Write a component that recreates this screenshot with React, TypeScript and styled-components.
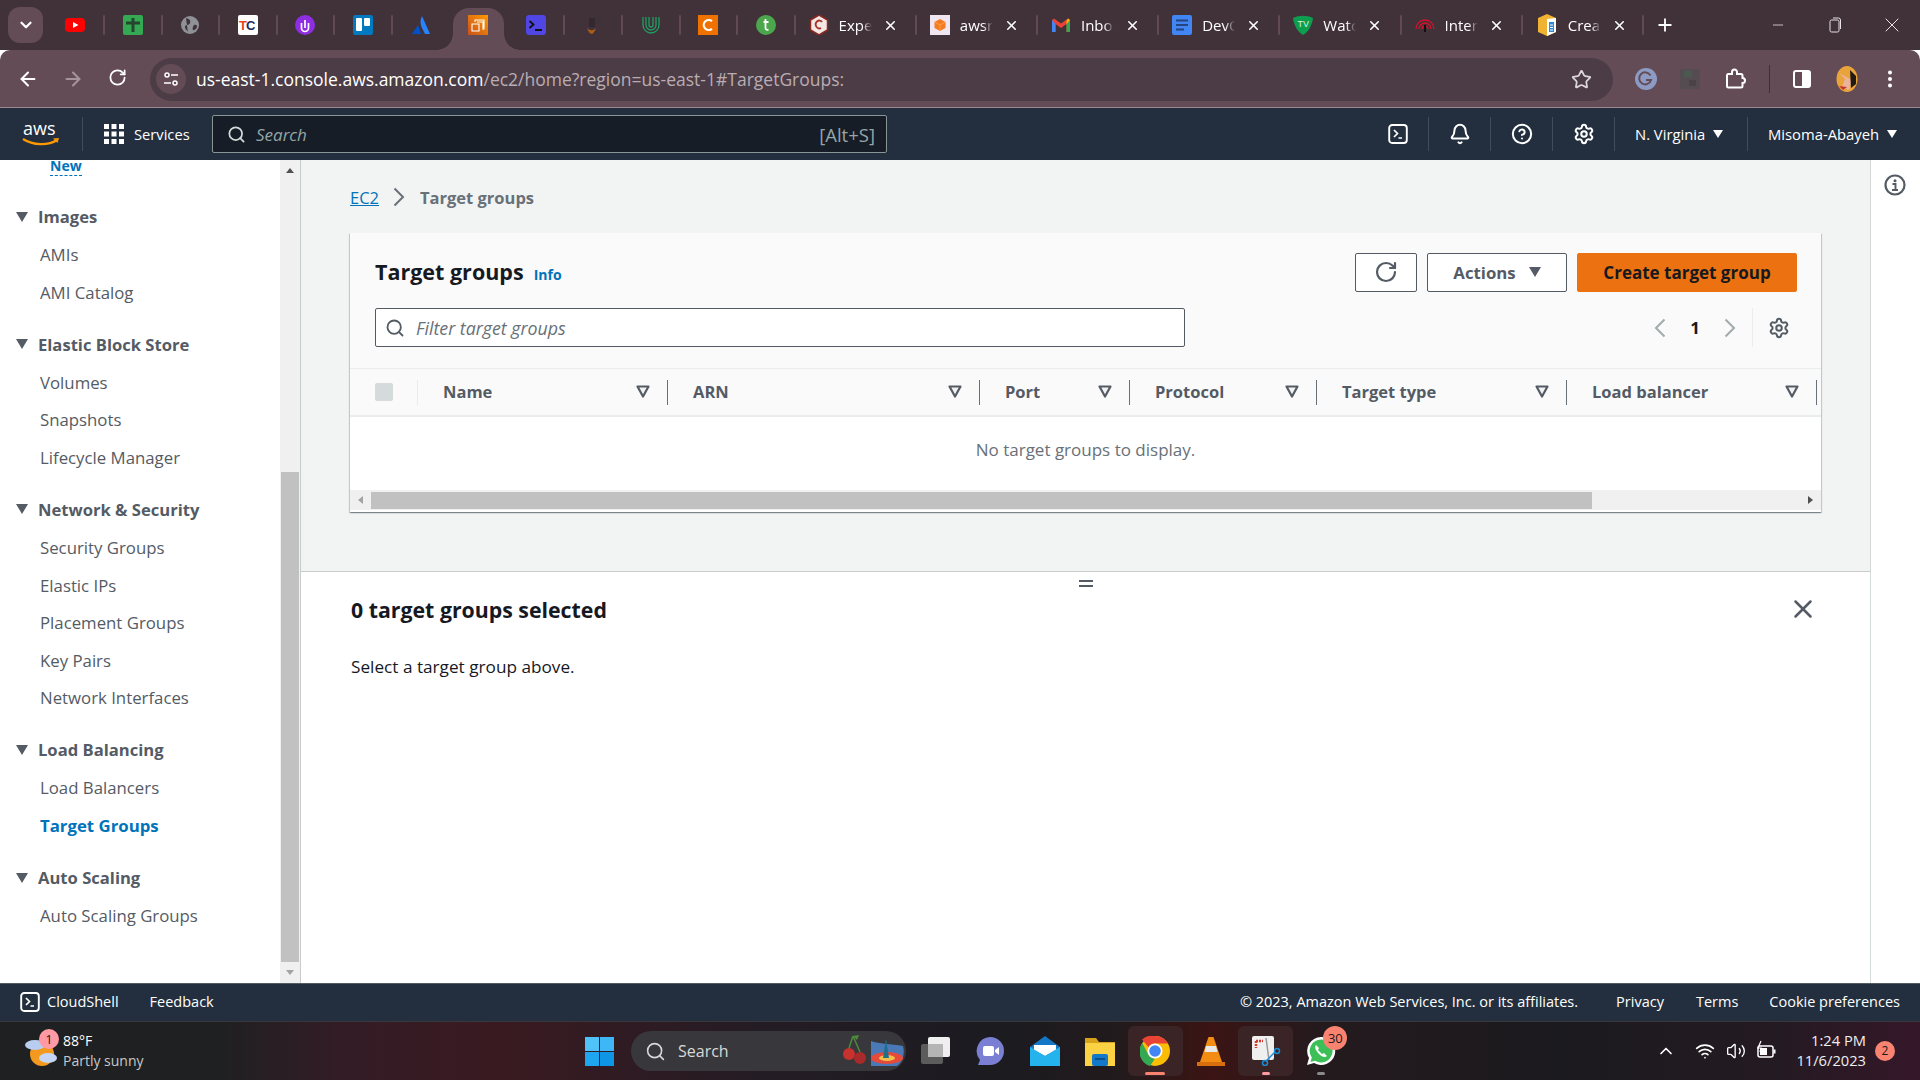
import React from "react";
import styled, { createGlobalStyle } from "styled-components";
import {
  ArrowLeft, ArrowRight, RotateCw, Star, Search, X, Plus, Minus, Bell, CircleHelp, Settings,
  ChevronDown, ChevronUp, EllipsisVertical, Wifi, Volume2,
} from "lucide-react";

const UI = `"Open Sans", "Noto Sans", "Liberation Sans", sans-serif`;
const CONSOLE = `"Open Sans", "Noto Sans", "Liberation Sans", sans-serif`;

const Global = createGlobalStyle`
  html, body { margin: 0; padding: 0; background: #fff; }
  * { box-sizing: border-box; }
`;

const Page = styled.div`
  width: 1920px; height: 1080px; overflow: hidden;
  display: flex; flex-direction: column;
  font-family: ${CONSOLE};
`;

/* ---------- browser tab strip ---------- */
const TabStrip = styled.div`
  height: 50px; flex: none; background: #413139;
  display: flex; align-items: stretch; position: relative;
`;
const TabSearch = styled.div`
  width: 35px; height: 36px; margin: 7px 3.5px 0 8px; border-radius: 12px;
  background: #644c57; color: #fff; display: flex; align-items: center; justify-content: center;
`;
const Tab = styled.div<{ $wide?: boolean; $sep?: boolean }>`
  position: relative; z-index: 0; flex: none;
  width: ${p => (p.$wide ? "121.2px" : "57.55px")};
  margin-top: 8px;
  display: flex; align-items: center;
  justify-content: ${p => (p.$wide ? "flex-start" : "center")};
  padding: ${p => (p.$wide ? "0 0 8px 14px" : "0 0 8px 0")};
  color: #fff; font-family: ${UI}; font-size: 15px;
  &::after {
    content: ""; position: absolute; right: -1px; top: 7px; width: 2px; height: 20px; border-radius: 1px;
    background: ${p => (p.$sep ? "#5f4a55" : "transparent")};
  }
`;
const ActiveShape = styled.span`
  position: absolute; z-index: -1; left: 4px; right: 3px; top: 0; bottom: 0;
  background: #644c57; border-radius: 16px 16px 0 0;
`;
const Flare = styled.span<{ $right?: boolean }>`
  position: absolute; bottom: 0; width: 16px; height: 16px;
  ${p => (p.$right ? "right: -16px;" : "left: -16px;")}
  background: ${p => (p.$right
    ? "radial-gradient(circle at 100% 0, transparent 15.5px, #644c57 16px)"
    : "radial-gradient(circle at 0 0, transparent 15.5px, #644c57 16px)")};
`;
const TabTitle = styled.span`
  width: 33px; margin-left: 10px; overflow: hidden; white-space: nowrap; font-size: 15px;
  -webkit-mask-image: linear-gradient(90deg, #000 70%, transparent);
  mask-image: linear-gradient(90deg, #000 70%, transparent);
`;
const TabClose = styled.span`
  margin-left: 11px; display: flex; color: #fff;
`;
const NewTab = styled.div`
  width: 44px; display: flex; align-items: center; justify-content: center; color: #fff;
`;
const WindowControls = styled.div`
  margin-left: auto; display: flex; align-items: center; color: #e8e2e5; height: 50px;
`;
const WinBtn = styled.div`
  width: 57px; display: flex; align-items: center; justify-content: center;
`;

/* ---------- browser toolbar ---------- */
const Toolbar = styled.div`
  height: 58px; flex: none; background: #644c57; border-top-left-radius: 10px; border-top-right-radius: 10px;
  border-bottom: 1px solid #9b8893;
  display: flex; align-items: center; color: #fff; overflow: hidden;
`;
const NavGroupBtns = styled.div`
  flex: none; display: flex; padding-left: 6px; width: 150px;
`;
const NavBtn = styled.div<{ $dim?: boolean }>`
  width: 44.5px; display: flex; justify-content: center;
  color: ${p => (p.$dim ? "#a5949d" : "#fff")};
`;
const Omnibox = styled.div`
  width: 1463px; flex: none; height: 43px; margin-top: 1px; border-radius: 22px; background: #4c3c45;
  display: flex; align-items: center; padding: 0 21px 0 6px;
`;
const SiteChip = styled.div`
  width: 30px; height: 30px; border-radius: 50%; background: #644c57;
  display: flex; align-items: center; justify-content: center; flex: none;
`;
const Url = styled.div`
  margin-left: 10px; font-family: ${UI}; font-size: 17.5px; color: #fff; white-space: nowrap;
  span { color: #b9adb3; }
`;
const OmniEnd = styled.div`
  margin-left: auto; display: flex; color: #dcd5d9;
`;
const ToolIcon = styled.div<{ $w: number }>`
  width: ${p => p.$w}px; display: flex; justify-content: center; flex: none; color: #fff;
`;
const ToolSep = styled.div`
  width: 1px; height: 28px; background: #3f3038; flex: none;
`;

/* ---------- aws top nav ---------- */
const TopNav = styled.div`
  height: 52px; flex: none; background: #232f3e; display: flex; align-items: center; color: #fff;
`;
const LogoWrap = styled.div`
  width: 83px; height: 34px; padding-left: 22px; border-right: 1px solid #414d5c; display: flex; align-items: center;
`;
const ServicesBtn = styled.div`
  width: 129px; display: flex; align-items: center; padding-left: 21px; gap: 10px; font-size: 14.7px;
`;
const NavSearch = styled.div`
  width: 675px; height: 38px; background: #161d26; border: 1px solid #879596; border-radius: 2px;
  display: flex; align-items: center; padding: 0 11px 0 14px; color: #95a5a6;
  font-size: 17px;
`;
const NavSearchText = styled.span`
  margin-left: 10px; font-style: italic; color: #95a5a6;
`;
const NavSearchKey = styled.span`
  margin-left: auto; font-size: 18.5px; color: #95a5a6;
`;
const NavRight = styled.div`
  margin-left: auto; display: flex; align-items: center; height: 34px; padding-right: 22px;
`;
const NavIcon = styled.div`
  width: 62px; height: 100%; display: flex; align-items: center; justify-content: center;
  border-right: 1px solid #414d5c;
`;
const NavMenu = styled.div<{ $w: number; $last?: boolean }>`
  width: ${p => p.$w}px; height: 100%; display: flex; align-items: center; gap: 8px; font-size: 14.8px; padding-left: 20px; white-space: nowrap;
  ${p => (p.$last ? "" : "border-right: 1px solid #414d5c;")}
`;
const Caret = styled.span`
  width: 0; height: 0; border-left: 5px solid transparent; border-right: 5px solid transparent; border-top: 8px solid #fff;
`;

/* ---------- body ---------- */
const Body = styled.div`
  flex: 1; display: flex; min-height: 0;
`;
const Sidebar = styled.nav`
  width: 280px; flex: none; overflow: hidden; background: #fff; font-size: 16.8px;
`;
const NewLink = styled.div`
  width: fit-content; margin-left: 50px; margin-bottom: 22px; height: 16px; line-height: 12px;
  font-size: 14px; font-weight: 700; color: #0073bb; border-bottom: 1px dashed #0073bb;
`;
const NavGroup = styled.div`
  margin-bottom: 14.5px;
`;
const GroupHead = styled.div`
  height: 37px; margin-bottom: 1px; display: flex; align-items: center; padding-left: 16px; gap: 10px;
  font-weight: 700; font-size: 16.6px; color: #545b64;
`;
const GroupCaret = styled.span`
  width: 0; height: 0; border-left: 6.5px solid transparent; border-right: 6.5px solid transparent; border-top: 10px solid #545b64;
`;
const NavItem = styled.div<{ $active?: boolean }>`
  height: 37.6px; line-height: 37.6px; padding-left: 40px;
  color: ${p => (p.$active ? "#0073bb" : "#545b64")};
  font-weight: ${p => (p.$active ? 700 : 400)};
`;
const ScrollTrack = styled.div`
  width: 20px; flex: none; background: #f0f0f0; display: flex; flex-direction: column; align-items: center; padding: 0 1px;
`;
const ScrollArrow = styled.div<{ $down?: boolean }>`
  height: 21px; flex: none; display: flex; align-items: center; justify-content: center; width: 100%;
  &::before {
    content: ""; width: 0; height: 0; border-left: 4.5px solid transparent; border-right: 4.5px solid transparent;
    ${p => (p.$down ? "border-top: 5px solid #a3a3a3;" : "border-bottom: 5px solid #505050;")}
  }
`;
const ScrollGap = styled.div`
  height: 291px; flex: none;
`;
const ScrollThumb = styled.div`
  flex: 1; width: 100%; background: #c1c1c1;
`;
const MainCol = styled.main`
  flex: 1; min-width: 0; display: flex; flex-direction: column; border-left: 1px solid #c8cccc; border-right: 1px solid #d5dbdb;
`;
const TopPane = styled.section`
  height: 411px; flex: none; background: #f2f3f3; padding: 0 49px;
`;
const Crumbs = styled.div`
  height: 73px; display: flex; align-items: center; font-size: 16.5px; color: #687078; font-weight: 700;
  padding-top: 1px;
`;
const CrumbLink = styled.span`
  color: #0073bb; font-weight: 400; text-decoration: underline;
`;
const CrumbSep = styled.span`
  display: flex; margin: 0 15px 0 14px; color: #687078;
`;
const Card = styled.div`
  background: #fff; box-shadow: 0 1px 1px 0 rgba(0,28,36,.3), 1px 1px 1px 0 rgba(0,28,36,.15), -1px 1px 1px 0 rgba(0,28,36,.15);
  height: 279px;
`;
const CardHead = styled.div`
  background: #fafafa; padding: 20px 25px 21px 25px; height: 135px;
`;
const HeadRow = styled.div`
  display: flex; align-items: center; height: 39px;
`;
const FilterRow = styled(HeadRow)`
  margin-top: 16px;
`;
const CardTitle = styled.h2`
  margin: 0 0 3px; font-size: 21.5px; font-weight: 700; color: #16191f;
`;
const InfoLink = styled.span`
  margin-left: 10px; font-size: 14px; font-weight: 700; color: #0073bb; padding-top: 3px;
`;
const Actions = styled.div`
  margin-left: auto; display: flex; gap: 10px; margin-right: -1px;
`;
const Btn = styled.button<{ $w: number }>`
  width: ${p => p.$w}px; height: 39px; background: #fff; border: 1px solid #545b64; border-radius: 2px;
  display: flex; align-items: center; justify-content: center; gap: 13px;
  font-family: ${CONSOLE}; font-size: 16.8px; font-weight: 700; color: #545b64; padding: 0 0 1px;
`;
const PrimaryBtn = styled(Btn)`
  background: #ec7211; border-color: #ec7211; color: #16191f; font-size: 17px;
`;
const BtnCaret = styled.span`
  width: 0; height: 0; border-left: 6.5px solid transparent; border-right: 6.5px solid transparent; border-top: 10px solid #545b64;
`;
const FilterBox = styled.div`
  width: 810px; height: 39px; background: #fff; border: 1px solid #545b64; border-radius: 2px;
  display: flex; align-items: center; padding-left: 9px; gap: 11px; color: #545b64;
`;
const FilterText = styled.span`
  font-style: italic; font-size: 17.8px; color: #687078;
`;
const Pager = styled.div`
  margin-left: auto; display: flex; align-items: center; height: 39px; margin-right: -9px;
`;
const PagerArrow = styled.span`
  display: flex; color: #a0abab;
`;
const PagerNum = styled.span`
  width: 58px; text-align: center; font-size: 16.8px; font-weight: 700; color: #16191f;
`;
const PagerGear = styled.div`
  margin-left: 16px; height: 39px; width: 53px; border-left: 1px solid #eaeded;
  display: flex; align-items: center; justify-content: center; color: #545b64;
`;
const TableHead = styled.div`
  height: 49px; background: #fafafa; border-top: 1px solid #eaeded; border-bottom: 2px solid #eaeded;
  display: grid; grid-template-columns: 68px 250px 312px 150px 187px 250px 250px 1fr; align-items: center;
`;
const HeadCell = styled.div<{ $light?: boolean }>`
  position: relative; height: 25px; display: flex; align-items: center; justify-content: space-between;
  padding: 0 17px 1px 25px; font-weight: 700; font-size: 16.5px; color: #545b64;
  border-right: 1px solid ${p => (p.$light ? "#eaeded" : "#687078")};
`;
const CheckCell = styled(HeadCell)`
  padding: 0 0 0 25px;
`;
const CheckBox = styled.span`
  width: 18px; height: 18px; background: #d5dbdb; border-radius: 2px;
`;
const TableBody = styled.div`
  height: 73px; background: #fff; display: flex; align-items: center; justify-content: center;
  font-size: 17px; color: #687078; padding-bottom: 8px;
`;
const HScroll = styled.div`
  height: 20px; background: #f0f0f0; display: flex; align-items: center;
`;
const HArrow = styled.span<{ $right?: boolean }>`
  width: 21px; flex: none; display: flex; justify-content: center;
  ${p => (p.$right ? "margin-left: auto;" : "")}
  &::before {
    content: ""; width: 0; height: 0; border-top: 4.5px solid transparent; border-bottom: 4.5px solid transparent;
    ${p => (p.$right ? "border-left: 5px solid #505050;" : "border-right: 5px solid #a3a3a3;")}
  }
`;
const HThumb = styled.div`
  width: 1221px; height: 17px; background: #c1c1c1;
`;
const BottomPane = styled.section`
  flex: 1; background: #fff; border-top: 1px solid #c8cccc; padding: 0 49px 0 50px;
`;
const Handle = styled.div`
  height: 21px; display: flex; flex-direction: column; align-items: center; justify-content: center; gap: 3px; padding-top: 1px;
  span { width: 14px; height: 2px; background: #545b64; display: block; }
`;
const BottomHead = styled.div`
  display: flex; align-items: center; justify-content: space-between; height: 32px; padding-right: 3px;
`;
const BottomTitle = styled.h2`
  margin: 0; font-size: 21.3px; font-weight: 700; color: #16191f;
`;
const BottomText = styled.p`
  margin: 30px 0 0; font-size: 17.2px; color: #16191f; line-height: 24px;
`;
const Rail = styled.aside`
  width: 49px; flex: none; background: #fff; display: flex; justify-content: center; padding-top: 14px; padding-right: 2px; color: #545b64;
`;

/* ---------- console footer ---------- */
const Footer = styled.footer`
  height: 38px; flex: none; background: #232f3e; border-top: 1px solid #545b64; color: #fff;
  display: flex; align-items: center; font-size: 14.5px; padding: 0 20px 2px;
`;
const FooterItem = styled.span<{ $l?: number }>`
  margin-left: ${p => p.$l ?? 0}px; white-space: nowrap; display: flex; align-items: center; gap: 7px;
`;
const FooterEnd = styled.div`
  margin-left: auto; display: flex;
`;

/* ---------- windows taskbar ---------- */
const Taskbar = styled.div`
  height: 59px; flex: none; position: relative; display: flex; align-items: center; color: #fff; font-family: ${UI};
  border-top: 1px solid #38383c;
  background: linear-gradient(90deg, #1f2022 0, #1f2022 220px, #331c26 340px, #3a1a21 500px, #241c24 760px, #1b1b20 1000px, #221a1c 1120px, #3b1414 1210px, #241a1e 1320px, #1b1a1f 1560px, #241a22 1780px, #351729 1920px);
`;
const Weather = styled.div`
  position: relative; width: 631px; flex: none; height: 100%; padding-left: 24px; display: flex; align-items: center;
  font-size: 14px; line-height: 20px; padding-bottom: 1px;
`;
const WeatherBadge = styled.span`
  position: absolute; left: 39px; top: 7px; width: 20px; height: 20px; border-radius: 50%;
  background: #ff99a4; color: #1a1a1a; font-size: 13px; text-align: center; line-height: 20px;
`;
const WeatherText = styled.div`
  margin-left: 5px;
  small { display: block; font-size: 14px; color: #c8c8c8; }
`;
const WinLogo = styled.div`
  position: absolute; left: 585px; top: 15px; display: flex;
`;
const TaskSearch = styled.div`
  width: 275px; height: 40px; border-radius: 20px; background: #38383c; flex: none; position: relative;
  display: flex; align-items: center; padding-left: 14px; gap: 12px; color: #d8d8d8; font-size: 16px;
`;
const SearchArt = styled.div`
  position: absolute; right: 1px; top: 2px; display: flex;
`;
const TaskIcon = styled.div<{ $active?: boolean }>`
  position: relative; width: 55.2px; height: 50px; flex: none; display: flex; align-items: center; justify-content: center;
  ${p => (p.$active ? `background: #3a2426; border-radius: 6px;` : "")}
`;
const TaskDot = styled.span<{ $w: number; $c: string }>`
  position: absolute; bottom: 1px; left: 50%; transform: translateX(-50%);
  height: 3px; border-radius: 2px; width: ${p => p.$w}px; background: ${p => p.$c};
`;
const CountBadge = styled.span`
  position: absolute; left: 30px; top: 0; width: 24px; height: 24px; border-radius: 50%;
  background: #f98371; color: #1a1a1a; font-size: 13px; text-align: center; line-height: 24px;
`;
const Tray = styled.div`
  margin-left: auto; display: flex; align-items: center; height: 100%; padding-right: 25px; color: #fff;
`;
const TrayIcon = styled.div<{ $w: number }>`
  width: ${p => p.$w}px; display: flex; justify-content: center; flex: none;
`;
const Clock = styled.div`
  text-align: right; font-size: 14.7px; line-height: 20px; margin-left: 16px; color: #eee; white-space: nowrap; padding-bottom: 2px;
`;
const ClockBadge = styled.span`
  margin-left: 9px; width: 20px; height: 20px; border-radius: 50%; background: #f98371; color: #1a1a1a;
  font-size: 12px; text-align: center; line-height: 20px;
`;
const TaskCenter = styled.div`
  display: flex; align-items: center; margin-left: 1px;
`;

/* ---------- drawings ---------- */
const S = ({ children, size = 20, vb = "0 0 20 20", w }: { children: React.ReactNode; size?: number; vb?: string; w?: number }) => (
  <svg width={w ?? size} height={size} viewBox={vb} style={{ display: "block", flex: "none" }}>{children}</svg>
);

const icons: Record<string, React.ReactNode> = {
  yt: <S><rect y="3" width="20" height="14" rx="4" fill="#f00" /><path d="M8 7l5.5 3L8 13z" fill="#fff" /></S>,
  sheet: <S><rect width="20" height="20" rx="2" fill="#34a853" /><path d="M3 8h14M10 3v14" stroke="#24452f" strokeWidth="3" /></S>,
  globe: <S><circle cx="10" cy="10" r="9" fill="#8e9297" /><path d="M6 3c3 1 5 2 4 5s-5 1-5 4 3 3 3 6M14 10c3-1 3 1 3 2s-3 4-4 3 0-4 1-5z" fill="#413139" /></S>,
  tc: <S><rect width="20" height="20" rx="2" fill="#fff" /><text x="1" y="15" fontFamily="Liberation Sans" fontSize="13" fontWeight="700" fill="#e8471b">T</text><text x="8" y="15" fontFamily="Liberation Sans" fontSize="13" fontWeight="700" fill="#1c2a5e">C</text></S>,
  up: <S><circle cx="10" cy="10" r="10" fill="#8e2de2" /><path d="M6.5 8v5a3.5 3.5 0 007 0V8" stroke="#fff" strokeWidth="1.7" fill="none" /><path d="M10 5v8" stroke="#fff" strokeWidth="1.7" /></S>,
  trello: <S><rect width="20" height="20" rx="2" fill="#0079bf" /><rect x="3" y="3" width="6" height="13" rx="1" fill="#fff" /><rect x="11" y="3" width="6" height="8" rx="1" fill="#fff" /></S>,
  atl: <S><path d="M11 1c-2 4-2 8 0 12l3 6h5z" fill="#2684ff" /><path d="M7 10L1 19h9z" fill="#0052cc" /></S>,
  ec2: <S><defs><linearGradient id="ec" x1="0" y1="1" x2="1" y2="0"><stop offset="0" stopColor="#c8511b" /><stop offset="1" stopColor="#f90" /></linearGradient></defs><rect width="20" height="20" fill="url(#ec)" /><path d="M4 9h7v7H4zM7 7V5h9v9h-2M9 7h6v6" stroke="#fff" strokeWidth="1.1" fill="none" /></S>,
  shell: <S><rect width="20" height="20" rx="3" fill="#5046e4" /><path d="M3.5 6l4 3.5-4 3.5M9 15h7" stroke="#111" strokeWidth="1.8" fill="none" /></S>,
  amz: <S><path d="M6 3h6v9H6z" fill="#33282d" /><path d="M12 5h6v4h-6z" fill="#3e3138" /><path d="M4 13c3 3 6 3 9 0-1 3-3 6-4 6-2 0-4-3-5-6z" fill="#a85f14" /></S>,
  ug: <S><path d="M2 2v8a8 8 0 0016 0V2" stroke="#1f9d63" strokeWidth="1.3" fill="none" /><path d="M5 2v8a5 5 0 0010 0V2" stroke="#1f9d63" strokeWidth="1.3" fill="none" /><path d="M8 2v8a2 2 0 004 0V2" stroke="#1f9d63" strokeWidth="1.3" fill="none" /></S>,
  co: <S><rect width="20" height="20" fill="#ef7100" /><path d="M14 6.2a5 5 0 100 7.6" stroke="#fff" strokeWidth="2.2" fill="none" /></S>,
  t: <S><circle cx="10" cy="10" r="10" fill="#4ca64c" /><path d="M9.5 4v9c0 2 2 2 3 1.5M7.5 7h5" stroke="#fff" strokeWidth="1.8" fill="none" /></S>,
  exp: <S><path d="M10 0l8.5 5v10L10 20l-8.5-5V5z" fill="#f4e8e4" stroke="#8a2a20" strokeWidth="1.5" /><path d="M13 7a3.5 4 0 10-1 6" stroke="#a83225" strokeWidth="1.8" fill="none" /></S>,
  aws2: <S><rect width="20" height="20" fill="#efe6f1" /><path d="M10 4l5.5 3v6L10 16l-5.5-3V7z" fill="#f47b20" /><path d="M10 10l5.5-3M10 10v6M10 10L4.5 7" stroke="#fbb26a" strokeWidth=".6" /></S>,
  gm: <S><path d="M1 5v12h3.5V9L10 13l5.5-4v8H19V5l-2-1.5L10 8.5 3 3.5z" fill="#ea4335" /><path d="M1 5v12h3.5V9z" fill="#4285f4" /><path d="M15.5 9v8H19V5z" fill="#34a853" /><path d="M17 3.5L19 5l-3.5 4V6z" fill="#fbbc04" /></S>,
  doc: <S><rect width="20" height="20" rx="2" fill="#4285f4" /><path d="M4 5.5h12M4 10h12M4 14.5h8" stroke="#26457e" strokeWidth="1.8" /></S>,
  tv: <S><path d="M0 3c6-3 14-3 20 0-1 8-5 14-10 17C5 17 1 11 0 3z" fill="#0d9d4f" /><text x="4.5" y="12" fontFamily="Liberation Sans" fontSize="9" fill="#d7f5df">TV</text></S>,
  inter: <S><path d="M1 14a9 9 0 0118 0M4 14a6 6 0 0112 0M7 14a3 3 0 016 0" stroke="#d8112a" strokeWidth="1.3" fill="none" /><path d="M9 10h2v7H9z" fill="#111" /></S>,
  box: <S size={22} vb="0 0 20 22"><path d="M10 0l9 4v14l-9 4-9-4V4z" fill="#f0b232" /><path d="M10 5l9-1v14l-9 4z" fill="#fff" /><path d="M12 8h5v10h-5z" fill="#2b8ad8" /><path d="M13 11h3M13 13.5h3M13 16h3" stroke="#fff" strokeWidth="1" /></S>,
};

const Logo = () => (
  <svg width="39" height="25" viewBox="0 0 39 25" style={{ display: "block" }}>
    <text x="1" y="13" fontFamily="Open Sans, Liberation Sans" fontSize="18" fontWeight="400" fill="#fff">aws</text>
    <path d="M1 17c10 6.5 25 7 34 1" stroke="#f90" strokeWidth="2.2" fill="none" />
    <path d="M31 16.5l6-.5-1.5 5" fill="#f90" />
  </svg>
);
const ShellGlyph = ({ size = 20 }: { size?: number }) => (
  <S size={size}><rect x="1.2" y="1" width="17.6" height="18" rx="3" stroke="#fff" strokeWidth="1.9" fill="none" /><path d="M6 6l3.5 3.5L6 13M10.5 14h3.5" stroke="#fff" strokeWidth="1.7" fill="none" /></S>
);
const FilterTri = () => (
  <svg width="14" height="13" viewBox="0 0 14 13" style={{ display: "block", flex: "none" }}>
    <path d="M1.5 1.5h11L7 11.5z" fill="#f3f3f3" stroke="#545b64" strokeWidth="2.2" strokeLinejoin="round" />
  </svg>
);
const Chevron = ({ left }: { left?: boolean }) => (
  <svg width="12" height="20" viewBox="0 0 12 20" style={{ display: "block" }}>
    <path d={left ? "M10.5 1.5L2 10l8.5 8.5" : "M1.5 1.5L10 10l-8.5 8.5"} stroke="currentColor" strokeWidth="2" fill="none" />
  </svg>
);
const ChromeLogo = () => (
  <S size={30} vb="0 0 30 30">
    <circle cx="15" cy="15" r="15" fill="#fbbc04" />
    <path d="M15 0a15 15 0 0113 7.5H15a7.5 7.5 0 00-6.5 3.75L2 3.5A15 15 0 0115 0z" fill="#ea4335" />
    <path d="M2.2 7 8.5 18.75A7.5 7.5 0 0015 22.5L10 30A15 15 0 012.2 7z" fill="#34a853" />
    <circle cx="15" cy="15" r="7.5" fill="#fff" /><circle cx="15" cy="15" r="5.8" fill="#4285f4" />
  </S>
);

const tabs: { k: string; t?: string; sep?: boolean; active?: boolean }[] = [
  { k: "yt", sep: true }, { k: "sheet", sep: true }, { k: "globe", sep: true }, { k: "tc", sep: true }, { k: "up", sep: true },
  { k: "trello", sep: true }, { k: "atl" }, { k: "ec2", active: true }, { k: "shell", sep: true }, { k: "amz", sep: true },
  { k: "ug", sep: true }, { k: "co", sep: true }, { k: "t", sep: true },
  { k: "exp", t: "Expert", sep: true }, { k: "aws2", t: "awsre", sep: true }, { k: "gm", t: "Inbox", sep: true },
  { k: "doc", t: "DevOps", sep: true }, { k: "tv", t: "Watch", sep: true }, { k: "inter", t: "Internet", sep: true }, { k: "box", t: "Create", sep: true },
];

const nav = [
  { h: "Images", items: ["AMIs", "AMI Catalog"] },
  { h: "Elastic Block Store", items: ["Volumes", "Snapshots", "Lifecycle Manager"] },
  { h: "Network & Security", items: ["Security Groups", "Elastic IPs", "Placement Groups", "Key Pairs", "Network Interfaces"] },
  { h: "Load Balancing", items: ["Load Balancers", "Target Groups"] },
  { h: "Auto Scaling", items: ["Auto Scaling Groups"] },
];

const cols = ["Name", "ARN", "Port", "Protocol", "Target type", "Load balancer"];

export default function App() {
  return (
    <Page>
      <Global />
      <TabStrip>
        <TabSearch><ChevronDown size={18} strokeWidth={3} /></TabSearch>
        {tabs.map(t => (
          <Tab key={t.k} $wide={!!t.t} $sep={t.sep}>
            {t.active && <ActiveShape><Flare /><Flare $right /></ActiveShape>}
            {icons[t.k]}
            {t.t && <TabTitle>{t.t}</TabTitle>}
            {t.t && <TabClose><X size={15} strokeWidth={2.5} /></TabClose>}
          </Tab>
        ))}
        <NewTab><Plus size={20} strokeWidth={2.2} /></NewTab>
        <WindowControls>
          <WinBtn><Minus size={16} strokeWidth={1.2} /></WinBtn>
          <WinBtn>
            <S size={16} vb="0 0 14 16"><rect x="2" y="3" width="9" height="12" rx="1.5" stroke="#e8e2e5" fill="none" /><path d="M5 1h5.5a2 2 0 012 2v9" stroke="#e8e2e5" fill="none" /></S>
          </WinBtn>
          <WinBtn><X size={24} strokeWidth={1} /></WinBtn>
        </WindowControls>
      </TabStrip>

      <Toolbar>
        <NavGroupBtns>
          <NavBtn><ArrowLeft size={22} strokeWidth={2.2} /></NavBtn>
          <NavBtn $dim><ArrowRight size={22} strokeWidth={2.2} /></NavBtn>
          <NavBtn><RotateCw size={19} strokeWidth={2.2} /></NavBtn>
        </NavGroupBtns>
        <Omnibox>
          <SiteChip>
            <S size={16} vb="0 0 16 16"><circle cx="4" cy="4" r="2" stroke="#fff" strokeWidth="1.5" fill="none" /><path d="M8 4h7M1 12h7" stroke="#fff" strokeWidth="1.7" /><circle cx="12" cy="12" r="2" stroke="#fff" strokeWidth="1.5" fill="none" /></S>
          </SiteChip>
          <Url>us-east-1.console.aws.amazon.com<span>/ec2/home?region=us-east-1#TargetGroups:</span></Url>
          <OmniEnd><Star size={21} strokeWidth={2} /></OmniEnd>
        </Omnibox>
        <ToolIcon $w={66}>
          <S size={22} vb="0 0 22 22"><circle cx="11" cy="11" r="11" fill="#8d9bc4" /><path d="M15.5 7.5A6 6 0 1016 12h-5" stroke="#644c57" strokeWidth="2" fill="none" /></S>
        </ToolIcon>
        <ToolIcon $w={22}>
          <S size={20}><rect width="20" height="20" fill="#544c50" /><rect x="4" y="2" width="8" height="6" fill="#4a5a4e" /><rect x="9" y="11" width="7" height="6" fill="#4b4247" /></S>
        </ToolIcon>
        <ToolIcon $w={68}>
          <S size={22} vb="0 0 22 22"><path d="M4 6h4V4a2.5 2.5 0 015 0v2h4a1.5 1.5 0 011.5 1.5V10a2.5 2.5 0 010 5v3a1.5 1.5 0 01-1.5 1.5H4.5A1.5 1.5 0 013 18V7.5A1.5 1.5 0 014 6z" stroke="#fff" strokeWidth="2" fill="none" /></S>
        </ToolIcon>
        <ToolSep />
        <ToolIcon $w={64}>
          <S size={20}><rect x="2" y="2" width="16" height="16" rx="2" stroke="#fff" strokeWidth="2" fill="none" /><rect x="10" y="2" width="8" height="16" fill="#fff" /></S>
        </ToolIcon>
        <ToolIcon $w={26}>
          <S size={26} vb="0 0 26 26"><ellipse cx="13" cy="13" rx="10.5" ry="13" fill="#e9a33b" /><path d="M5 7l6 6-3 8 7 3 3-10z" fill="#eab39a" /><path d="M16 4l6 6v8l-5 4z" fill="#211a14" /><path d="M5 20l4 4 4-3z" fill="#c8362b" /></S>
        </ToolIcon>
        <ToolIcon $w={60}><EllipsisVertical size={22} strokeWidth={2.4} /></ToolIcon>
      </Toolbar>

      <TopNav>
        <LogoWrap><Logo /></LogoWrap>
        <ServicesBtn>
          <S size={20}>
            {[0, 7.5, 15].flatMap(x => [0, 7.5, 15].map(y => <rect key={`${x}-${y}`} x={x} y={y} width="5" height="5" fill="#fff" />))}
          </S>
          Services
        </ServicesBtn>
        <NavSearch>
          <Search size={19} color="#d5dbdb" strokeWidth={2.2} />
          <NavSearchText>Search</NavSearchText>
          <NavSearchKey>[Alt+S]</NavSearchKey>
        </NavSearch>
        <NavRight>
          <NavIcon><ShellGlyph /></NavIcon>
          <NavIcon><Bell size={22} strokeWidth={2.2} /></NavIcon>
          <NavIcon><CircleHelp size={22} strokeWidth={2.2} /></NavIcon>
          <NavIcon><Settings size={22} strokeWidth={2.2} /></NavIcon>
          <NavMenu $w={133}>N. Virginia <Caret /></NavMenu>
          <NavMenu $w={150} $last>Misoma-Abayeh <Caret /></NavMenu>
        </NavRight>
      </TopNav>

      <Body>
        <Sidebar>
          <NewLink>New</NewLink>
          {nav.map(g => (
            <NavGroup key={g.h}>
              <GroupHead><GroupCaret />{g.h}</GroupHead>
              {g.items.map(i => <NavItem key={i} $active={i === "Target Groups"}>{i}</NavItem>)}
            </NavGroup>
          ))}
        </Sidebar>
        <ScrollTrack>
          <ScrollArrow />
          <ScrollGap />
          <ScrollThumb />
          <ScrollArrow $down />
        </ScrollTrack>
        <MainCol>
          <TopPane>
            <Crumbs>
              <CrumbLink>EC2</CrumbLink>
              <CrumbSep><Chevron /></CrumbSep>
              Target groups
            </Crumbs>
            <Card>
              <CardHead>
                <HeadRow>
                  <CardTitle>Target groups</CardTitle>
                  <InfoLink>Info</InfoLink>
                  <Actions>
                    <Btn $w={62}><RotateCw size={24} strokeWidth={2.2} /></Btn>
                    <Btn $w={140}>Actions <BtnCaret /></Btn>
                    <PrimaryBtn $w={220}>Create target group</PrimaryBtn>
                  </Actions>
                </HeadRow>
                <FilterRow>
                  <FilterBox><Search size={20} strokeWidth={2.2} /><FilterText>Filter target groups</FilterText></FilterBox>
                  <Pager>
                    <PagerArrow><Chevron left /></PagerArrow>
                    <PagerNum>1</PagerNum>
                    <PagerArrow><Chevron /></PagerArrow>
                    <PagerGear><Settings size={22} strokeWidth={2.2} /></PagerGear>
                  </Pager>
                </FilterRow>
              </CardHead>
              <TableHead>
                <CheckCell $light><CheckBox /></CheckCell>
                {cols.map(c => <HeadCell key={c}>{c}<FilterTri /></HeadCell>)}
              </TableHead>
              <TableBody>No target groups to display.</TableBody>
              <HScroll>
                <HArrow />
                <HThumb />
                <HArrow $right />
              </HScroll>
            </Card>
          </TopPane>
          <BottomPane>
            <Handle><span /><span /></Handle>
            <BottomHead>
              <BottomTitle>0 target groups selected</BottomTitle>
              <X size={30} color="#545b64" strokeWidth={2} />
            </BottomHead>
            <BottomText>Select a target group above.</BottomText>
          </BottomPane>
        </MainCol>
        <Rail>
          <S size={22} vb="0 0 22 22"><circle cx="11" cy="11" r="9.5" stroke="#545b64" strokeWidth="2.2" fill="none" /><circle cx="11" cy="6.8" r="1.5" fill="#545b64" /><path d="M8.5 10h3v5.5M8 16h6" stroke="#545b64" strokeWidth="1.9" fill="none" /></S>
        </Rail>
      </Body>

      <Footer>
        <FooterItem><ShellGlyph />CloudShell</FooterItem>
        <FooterItem $l={31}>Feedback</FooterItem>
        <FooterEnd>
          <FooterItem>© 2023, Amazon Web Services, Inc. or its affiliates.</FooterItem>
          <FooterItem $l={38}>Privacy</FooterItem>
          <FooterItem $l={32}>Terms</FooterItem>
          <FooterItem $l={31}>Cookie preferences</FooterItem>
        </FooterEnd>
      </Footer>

      <Taskbar>
        <Weather>
          <S size={34} vb="0 0 34 34">
            <circle cx="18" cy="20" r="12" fill="#f39a1e" />
            <ellipse cx="11" cy="11" rx="10" ry="5" fill="#b8cdf0" />
            <ellipse cx="24" cy="24" rx="9" ry="5" fill="#c4d6f4" />
          </S>
          <WeatherBadge>1</WeatherBadge>
          <WeatherText>88°F<small>Partly sunny</small></WeatherText>
        </Weather>
        <WinLogo>
          <S size={29} vb="0 0 29 29">
            <rect width="14" height="14" fill="#4fc3f7" /><rect x="15" width="14" height="14" fill="#3fb6f5" />
            <rect y="15" width="14" height="14" fill="#1ea7f0" /><rect x="15" y="15" width="14" height="14" fill="#0f95e6" />
          </S>
        </WinLogo>
        <TaskSearch>
          <Search size={21} strokeWidth={1.8} />
          Search
          <SearchArt>
            <S size={36} w={64} vb="0 0 64 36">
              <path d="M30 8c8 3 20 3 32 5 2 7 0 16-6 20H30z" fill="#4a79b8" />
              <ellipse cx="46" cy="25" rx="16" ry="6" fill="#e64a3b" />
              <ellipse cx="46" cy="25" rx="8" ry="3" fill="#f3c14b" />
              <path d="M45 6l3 19h-6z" fill="#1f6f8c" />
              <circle cx="8" cy="21" r="6" fill="#c8322e" /><circle cx="19" cy="25" r="6" fill="#a92a2a" />
              <path d="M8 15L12 3M19 19L12 3" stroke="#4f8a3c" strokeWidth="1.5" fill="none" />
              <path d="M12 3l6-1-2 5z" fill="#4f8a3c" />
            </S>
          </SearchArt>
        </TaskSearch>
        <TaskCenter>
          <TaskIcon>
            <S size={30} vb="0 0 30 30"><rect x="1" y="8" width="22" height="20" rx="2" fill="#5c5c5c" /><rect x="8" y="1" width="22" height="20" rx="2" fill="#efefef" /><rect x="8" y="8" width="15" height="13" fill="#b5b5b5" /></S>
          </TaskIcon>
          <TaskIcon>
            <S size={30} vb="0 0 30 30"><path d="M15 1a14 14 0 110 28H3l2-5A14 14 0 0115 1z" fill="#7b7fd4" /><rect x="8" y="10" width="11" height="10" rx="2" fill="#fff" /><path d="M20 14l4-3v8l-4-3z" fill="#fff" /></S>
          </TaskIcon>
          <TaskIcon>
            <S size={30} vb="0 0 30 30"><path d="M0 11L15 0l15 11v19H0z" fill="#1277c4" /><path d="M4 9h22v5l-11 6-11-6z" fill="#fff" /><path d="M0 11l15 9 15-9v19H0z" fill="#25b3ee" /></S>
          </TaskIcon>
          <TaskIcon>
            <S size={30} vb="0 0 30 30"><path d="M0 2h11l3 4h16v24H0z" fill="#d9a21b" /><path d="M0 7h30v23H0z" fill="#fbd244" /><rect x="7" y="18" width="16" height="12" rx="2" fill="#1278c9" /><path d="M10 23h10" stroke="#0c4f87" strokeWidth="2" /></S>
          </TaskIcon>
          <TaskIcon $active><ChromeLogo /><TaskDot $w={20} $c="#f98371" /></TaskIcon>
          <TaskIcon>
            <S size={30} vb="0 0 30 30"><path d="M12.5 1h5L26 26H4z" fill="#f28c13" /><path d="M10 10h10l1.5 6h-13z" fill="#e8e8e8" /><path d="M1 26h28v4H1z" fill="#d96f0c" /></S>
          </TaskIcon>
          <TaskIcon $active>
            <S size={30} vb="0 0 30 30"><rect x="1" y="0" width="22" height="24" rx="2" fill="#efefef" /><path d="M5 5h7M5 5v7" stroke="#d23c2e" strokeWidth="2.5" strokeDasharray="2 1" /><path d="M15 2l3 22" stroke="#999" strokeWidth="1.5" /><circle cx="26" cy="15" r="2.5" stroke="#1a8cd8" strokeWidth="1.5" fill="none" /><circle cx="14" cy="27" r="2.5" stroke="#1a8cd8" strokeWidth="1.5" fill="none" /><path d="M24 16l-9 9" stroke="#1a8cd8" strokeWidth="1.5" /></S>
            <TaskDot $w={8} $c="#ff99a4" />
          </TaskIcon>
          <TaskIcon>
            <S size={30} vb="0 0 30 30"><path d="M15 1a14 14 0 11-7 26l-7 2 2-7A14 14 0 0115 1z" fill="#fff" /><path d="M15 3.5a11.5 11.5 0 11-6 21.3l-4.5 1.2 1.3-4.4A11.5 11.5 0 0115 3.5z" fill="#3bbf56" /><path d="M10 9c-2 2 0 6 3 9s6 4 8 2l-3-3-2 1-4-4 1-2z" fill="#fff" /></S>
            <CountBadge>30</CountBadge>
            <TaskDot $w={8} $c="#8a8a8a" />
          </TaskIcon>
        </TaskCenter>
        <Tray>
          <TrayIcon $w={48}><ChevronUp size={20} strokeWidth={2} /></TrayIcon>
          <TrayIcon $w={30}><Wifi size={20} strokeWidth={2} /></TrayIcon>
          <TrayIcon $w={32}><Volume2 size={20} strokeWidth={1.6} /></TrayIcon>
          <TrayIcon $w={28}>
            <S size={22} vb="0 0 22 22"><rect x="3" y="6" width="15" height="11" rx="2" stroke="#fff" strokeWidth="1.5" fill="none" /><rect x="5" y="8" width="7" height="7" fill="#fff" /><path d="M18.5 9.5h2v4h-2" fill="#fff" /><path d="M6 1L3 8h3l-1 4" stroke="#fff" strokeWidth="1.2" fill="none" /></S>
          </TrayIcon>
          <Clock>1:24 PM<br />11/6/2023</Clock>
          <ClockBadge>2</ClockBadge>
        </Tray>
      </Taskbar>
    </Page>
  );
}
